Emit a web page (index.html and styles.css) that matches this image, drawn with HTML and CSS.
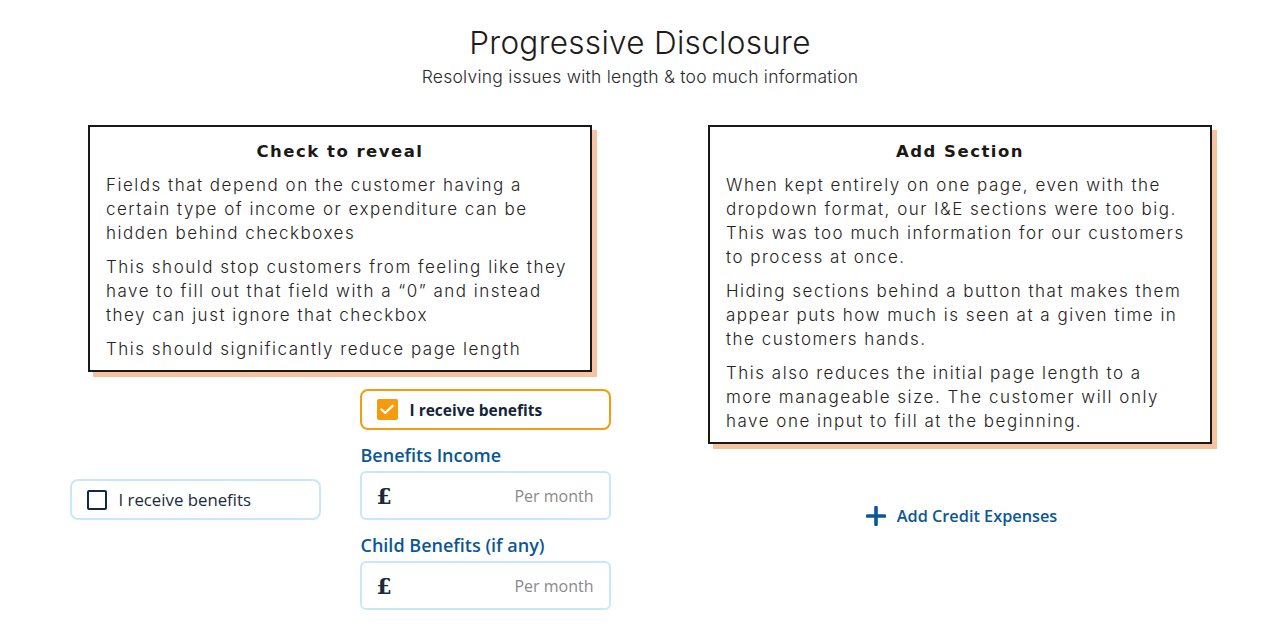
FILE: index.html
```html
<!DOCTYPE html>
<html>
<head>
<meta charset="utf-8">
<link rel="stylesheet" href="styles.css">
</head>
<body>
<header class="header">
  <h1 class="title">Progressive Disclosure</h1>
  <p class="subtitle">Resolving issues with length &amp; too much information</p>
</header>
<main class="columns">
  <section class="column">
    <div class="card">
      <h2 class="card-title">Check to reveal</h2>
      <p class="card-text">Fields that depend on the customer having a certain type of income or expenditure can be hidden behind checkboxes</p>
      <p class="card-text">This should stop customers from feeling like they have to fill out that field with a “0” and instead they can just ignore that checkbox</p>
      <p class="card-text">This should significantly reduce page length</p>
    </div>
    <div class="demo">
      <div class="demo-col">
        <label class="check-box">
          <span class="box"></span>
          <span class="check-label">I receive benefits</span>
        </label>
      </div>
      <div class="demo-col">
        <label class="check-box checked">
          <span class="box box-on">
            <svg width="14" height="11" viewBox="0 0 14 11"><path d="M1.5 5.5 L5.2 9 L12.5 1.8" fill="none" stroke="#fff" stroke-width="2.4" stroke-linecap="round" stroke-linejoin="round"/></svg>
          </span>
          <span class="check-label bold">I receive benefits</span>
        </label>
        <div class="field-label">Benefits Income</div>
        <div class="input"><span class="pound">£</span><span class="placeholder">Per month</span></div>
        <div class="field-label">Child Benefits (if any)</div>
        <div class="input"><span class="pound">£</span><span class="placeholder">Per month</span></div>
      </div>
    </div>
  </section>
  <section class="column">
    <div class="card">
      <h2 class="card-title">Add Section</h2>
      <p class="card-text">When kept entirely on one page, even with the dropdown format, our I&amp;E sections were too big. This was too much information for our customers to process at once.</p>
      <p class="card-text">Hiding sections behind a button that makes them appear puts how much is seen at a given time in the customers hands.</p>
      <p class="card-text">This also reduces the initial page length to a more manageable size. The customer will only have one input to fill at the beginning.</p>
    </div>
    <div class="add-row">
      <button class="add-btn">
        <svg width="20" height="20" viewBox="0 0 20 20"><path d="M10 1.5 V18.5 M1.5 10 H18.5" stroke="#0b5796" stroke-width="3.6" stroke-linecap="round"/></svg>
        <span>Add Credit Expenses</span>
      </button>
    </div>
  </section>
</main>
</body>
</html>
```
FILE: styles.css
```css
* { box-sizing: border-box; }
body {
  margin: 0;
  background: #ffffff;
  font-family: Inter, "Liberation Sans", sans-serif;
  color: #222;
}
.header {
  padding-top: 23px;
  text-align: center;
}
.title {
  margin: 0;
  font-size: 31.5px;
  line-height: 40px;
  font-weight: 300;
  color: #1e1b1a;
  letter-spacing: 0.3px;
}
.subtitle {
  margin: 2px 0 0;
  font-size: 17.5px;
  line-height: 24px;
  font-weight: 300;
  color: #2a2a2a;
  letter-spacing: 0.25px;
}
.columns {
  display: grid;
  grid-template-columns: 504px 504px;
  column-gap: 116px;
  justify-content: center;
  padding-left: 20px;
  margin-top: 36px;
}
.column {
  display: flex;
  flex-direction: column;
  align-items: center;
}
.card {
  width: 504px;
  border: 2px solid #1b1817;
  box-shadow: 5px 5px 0 #f5c3a1;
  padding: 13px 20px 9px 16px;
  background: #fff;
}
.card-title {
  margin: 0 0 9px;
  text-align: center;
  font-family: "DejaVu Sans", Inter, sans-serif;
  font-size: 16.5px;
  line-height: 24px;
  font-weight: 700;
  letter-spacing: 1.5px;
  color: #1b1817;
  padding-left: 4px;
}
.card-text {
  margin: 0 0 10px;
  font-size: 17px;
  line-height: 24px;
  font-weight: 300;
  letter-spacing: 1.5px;
  color: #262321;
}
.card-text:last-child { margin-bottom: 0; }

.demo {
  display: flex;
  align-items: center;
  gap: 39px;
  margin-top: 17px;
  font-family: "Open Sans", "Liberation Sans", sans-serif;
}
.demo-col {
  width: 251px;
  display: flex;
  flex-direction: column;
}
.check-box {
  display: flex;
  align-items: center;
  height: 41px;
  border: 2px solid #c8e7fb;
  border-radius: 8px;
  padding-left: 15px;
}
.check-box.checked {
  border-color: #f29c12;
}
.box {
  width: 20px;
  height: 20px;
  border: 2.5px solid #0f2a44;
  border-radius: 2px;
  margin-right: 12px;
  display: flex;
  align-items: center;
  justify-content: center;
}
.box-on {
  background: #f59b0c;
  border-color: #f59b0c;
  width: 21px;
  height: 21px;
}
.check-label {
  font-size: 16.8px;
  font-weight: 400;
  color: #1b2a3a;
}
.check-label.bold {
  font-weight: 700;
  font-size: 15.5px;
  color: #13253a;
}
.field-label {
  margin-top: 13px;
  margin-bottom: 4px;
  font-size: 18px;
  line-height: 24px;
  font-weight: 600;
  color: #0b5796;
  padding-left: 1px;
}
.input {
  height: 49px;
  border: 2px solid #c8e7fb;
  border-radius: 6px;
  display: flex;
  align-items: center;
  justify-content: space-between;
  padding: 0 15px 0 15px;
}
.pound {
  font-family: "DejaVu Serif", serif;
  font-weight: 700;
  font-size: 22px;
  color: #1b2a3a;
}
.placeholder {
  font-size: 16px;
  color: #8a8a8a;
  font-weight: 400;
}
.add-row {
  margin-top: 61px;
  padding-left: 3px;
  display: flex;
  justify-content: center;
}
.add-btn {
  display: flex;
  align-items: center;
  gap: 11px;
  background: none;
  border: none;
  padding: 0;
  font-family: "Open Sans", "Liberation Sans", sans-serif;
  font-size: 16.3px;
  font-weight: 600;
  color: #0b5796;
  cursor: pointer;
}
```
